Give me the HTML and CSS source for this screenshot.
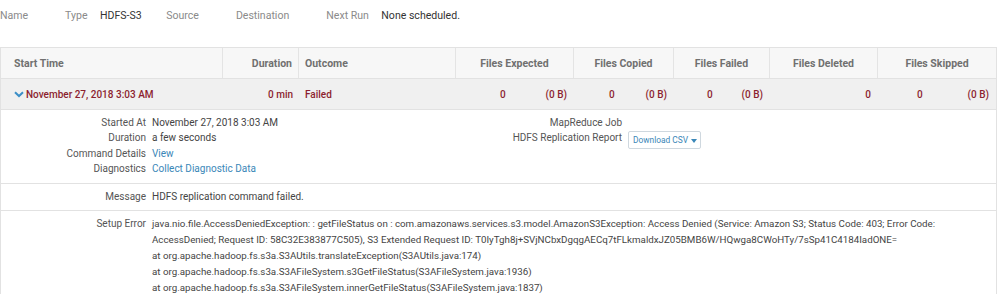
FILE: index.html
```html
<!DOCTYPE html>
<html lang="en">
<head>
  <meta charset="UTF-8" />
  <title>Replication History</title>
  <link rel="stylesheet" href="styles.css">
</head>
<body>
  <div class="summary">
    <div class="summary-item"><span class="summary-label">Name</span><span class="summary-value"></span></div>
    <div class="summary-item"><span class="summary-label">Type</span><span class="summary-value">HDFS-S3</span></div>
    <div class="summary-item"><span class="summary-label">Source</span><span class="summary-value"></span></div>
    <div class="summary-item"><span class="summary-label">Destination</span><span class="summary-value"></span></div>
    <div class="summary-item"><span class="summary-label">Next Run</span><span class="summary-value">None scheduled.</span></div>
  </div>

  <div class="history">
    <div class="history-row history-head">
      <div class="cell">Start Time</div>
      <div class="cell right">Duration</div>
      <div class="cell">Outcome</div>
      <div class="cell center">Files Expected</div>
      <div class="cell center">Files Copied</div>
      <div class="cell center">Files Failed</div>
      <div class="cell center">Files Deleted</div>
      <div class="cell center last">Files Skipped</div>
    </div>

    <div class="history-row history-run">
      <div class="cell">
        <svg class="chevron" width="10" height="7" viewBox="0 0 10 7"><path d="M1 1.2 L5 5 L9 1.2" fill="none" stroke="#3b8fc7" stroke-width="2"/></svg>
        November 27, 2018 3:03 AM
      </div>
      <div class="cell right">0 min</div>
      <div class="cell">Failed</div>
      <div class="cell counts"><span class="c1">0</span><span>(0 B)</span></div>
      <div class="cell counts"><span class="c2">0</span><span>(0 B)</span></div>
      <div class="cell counts"><span class="c3">0</span><span>(0 B)</span></div>
      <div class="cell counts only"><span>0</span></div>
      <div class="cell counts last"><span class="c4">0</span><span>(0 B)</span></div>
    </div>

    <div class="run-details">
      <div class="detail-half">
        <div class="dl">Started At</div><div class="dv">November 27, 2018 3:03 AM</div>
        <div class="dl">Duration</div><div class="dv">a few seconds</div>
        <div class="dl">Command Details</div><div class="dv"><a href="#">View</a></div>
        <div class="dl">Diagnostics</div><div class="dv"><a href="#">Collect Diagnostic Data</a></div>
      </div>
      <div class="detail-half">
        <div class="dl">MapReduce Job</div><div class="dv"></div>
        <div class="dl">HDFS Replication Report</div>
        <div class="dv"><button class="csv-btn">Download CSV <span class="caret"></span></button></div>
      </div>
    </div>

    <div class="run-message">
      <div class="dl">Message</div>
      <div class="dv">HDFS replication command failed.</div>
    </div>

    <div class="run-message error">
      <div class="dl">Setup Error</div>
      <div class="dv trace">java.nio.file.AccessDeniedException: : getFileStatus on : com.amazonaws.services.s3.model.AmazonS3Exception: Access Denied (Service: Amazon S3; Status Code: 403; Error Code:<br>AccessDenied; Request ID: 58C32E383877C505), S3 Extended Request ID: T0IyTgh8j+SVjNCbxDgqgAECq7tFLkmaldxJZ05BMB6W/HQwga8CWoHTy/7sSp41C4184IadONE=<br>at org.apache.hadoop.fs.s3a.S3AUtils.translateException(S3AUtils.java:174)<br>at org.apache.hadoop.fs.s3a.S3AFileSystem.s3GetFileStatus(S3AFileSystem.java:1936)<br>at org.apache.hadoop.fs.s3a.S3AFileSystem.innerGetFileStatus(S3AFileSystem.java:1837)</div>
    </div>
  </div>
</body>
</html>
```

FILE: styles.css
```css
body {
  margin: 0;
  font-family: Roboto, "Liberation Sans", sans-serif;
  color: #333;
  background: #fff;
}

.summary {
  display: flex;
  height: 30px;
  align-items: center;
  font-size: 10.55px;
  margin-bottom: 17px;
}

.summary-item {
  margin-right: 24.5px;
}

.summary-label {
  color: #8a8a8a;
  margin-right: 12.5px;
}

.summary-value {
  color: #333;
}

.history {
  width: 995px;
  border-left: 1px solid #e2e2e2;
  border-right: 1px solid #e2e2e2;
  font-size: 10px;
}

.history-row {
  display: grid;
  grid-template-columns: 222px 76px 157px 118px 100px 96px 108px 1fr;
  height: 30px;
  border-top: 1px solid #e2e2e2;
}

.cell {
  display: flex;
  align-items: center;
  padding: 0 6px;
  white-space: nowrap;
}

.cell.right {
  justify-content: flex-end;
}

.cell.center {
  justify-content: center;
}

.history-head {
  background: #f7f7f7;
  color: #707070;
  font-weight: bold;
  font-size: 10.5px;
}

.history-head .cell {
  border-right: 1px solid #e4e4e4;
}

.history-head .cell:first-child {
  padding-left: 13px;
}

.history-head .cell.last {
  border-right: none;
}

.history-run {
  background: #f0f0f0;
  color: #8c1f2f;
  font-weight: 500;
  font-size: 10px;
}

.history-run .cell:first-child {
  padding-left: 13px;
}

.chevron {
  margin-right: 2px;
}

.counts {
  justify-content: space-between;
  padding-right: 7px;
}

.counts .c1 { margin-left: 38px; }
.counts .c2 { margin-left: 29px; }
.counts .c3 { margin-left: 27px; }
.counts .c4 { margin-left: 33px; }

.counts.only {
  justify-content: flex-end;
}

.run-details {
  display: grid;
  grid-template-columns: 476px 1fr;
  border-top: 1px solid #e2e2e2;
  padding: 5px 0 0;
  height: 68px;
}

.detail-half {
  display: grid;
  grid-template-columns: 145px 1fr;
  column-gap: 6px;
  align-content: start;
  line-height: 15.4px;
}

.dl {
  text-align: right;
  color: #555;
}

.dv {
  color: #444;
}

.dv a {
  color: #3a87b8;
  text-decoration: none;
}

.trace {
  white-space: nowrap;
  font-size: 9.75px;
}

.csv-btn {
  margin-top: 1px;
  height: 18px;
  padding: 0 3px 0 4px;
  font-family: inherit;
  font-size: 8.4px;
  color: #3a87b8;
  background: #fff;
  border: 1px solid #cfd8df;
  border-radius: 2px;
  line-height: 16px;
}

.caret {
  display: inline-block;
  width: 0;
  height: 0;
  border-left: 3px solid transparent;
  border-right: 3px solid transparent;
  border-top: 4px solid #3a87b8;
  vertical-align: middle;
  margin-left: 1px;
}

.run-message {
  display: grid;
  grid-template-columns: 145px 1fr;
  column-gap: 6px;
  border-top: 1px solid #e2e2e2;
  padding: 5px 0 5px;
  line-height: 16px;
}
```
